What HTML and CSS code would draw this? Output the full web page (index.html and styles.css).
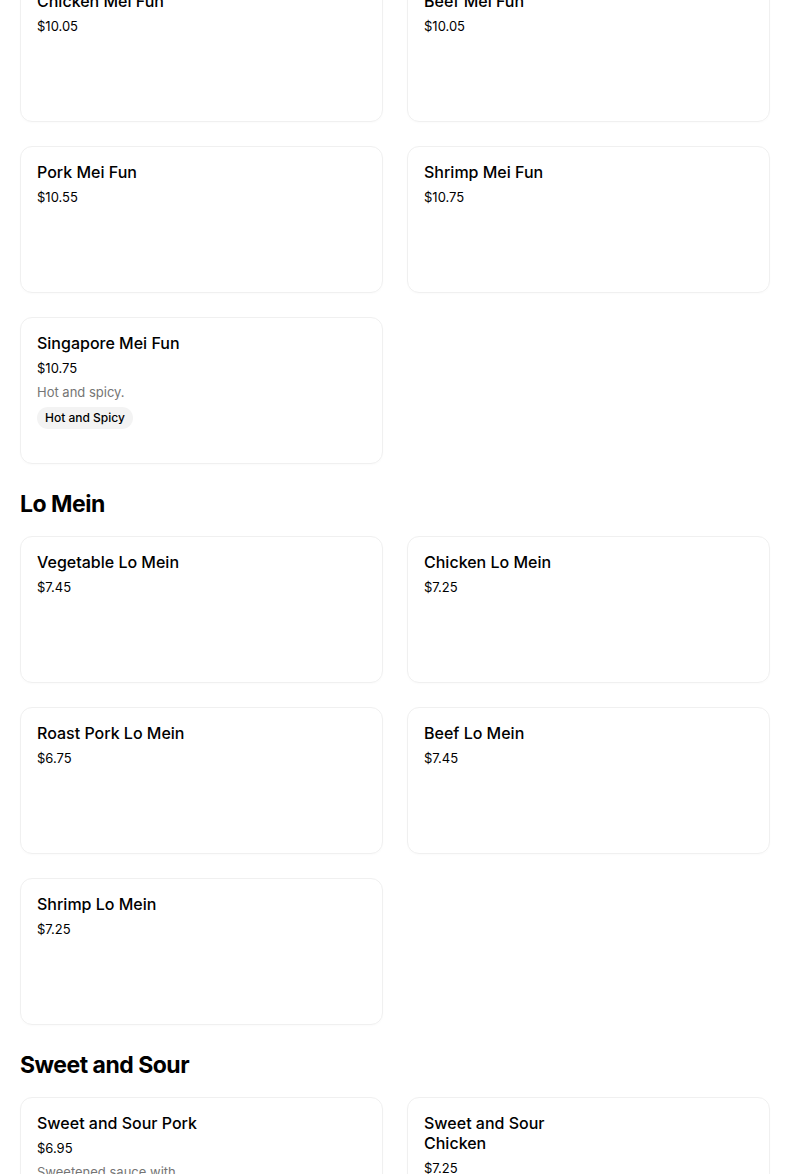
FILE: index.html
```html
<!DOCTYPE html>
<html>
<head>
<meta charset="utf-8">
<link rel="stylesheet" href="styles.css">
</head>
<body>
<main class="menu">
  <div class="grid first">
    <div class="card"><div class="info"><div class="name">Chicken Mei Fun</div><div class="price">$10.05</div></div></div>
    <div class="card"><div class="info"><div class="name">Beef Mei Fun</div><div class="price">$10.05</div></div></div>
    <div class="card"><div class="info"><div class="name">Pork Mei Fun</div><div class="price">$10.55</div></div></div>
    <div class="card"><div class="info"><div class="name">Shrimp Mei Fun</div><div class="price">$10.75</div></div></div>
    <div class="card"><div class="info"><div class="name">Singapore Mei Fun</div><div class="price">$10.75</div><div class="desc">Hot and spicy.</div><span class="tag">Hot and Spicy</span></div></div>
  </div>
  <h2 class="section">Lo Mein</h2>
  <div class="grid">
    <div class="card"><div class="info"><div class="name">Vegetable Lo Mein</div><div class="price">$7.45</div></div></div>
    <div class="card"><div class="info"><div class="name">Chicken Lo Mein</div><div class="price">$7.25</div></div></div>
    <div class="card"><div class="info"><div class="name">Roast Pork Lo Mein</div><div class="price">$6.75</div></div></div>
    <div class="card"><div class="info"><div class="name">Beef Lo Mein</div><div class="price">$7.45</div></div></div>
    <div class="card"><div class="info"><div class="name">Shrimp Lo Mein</div><div class="price">$7.25</div></div></div>
  </div>
  <h2 class="section">Sweet and Sour</h2>
  <div class="grid">
    <div class="card"><div class="info"><div class="name">Sweet and Sour Pork</div><div class="price">$6.95</div><div class="desc">Sweetened sauce with pineapple and peppers.</div></div></div>
    <div class="card"><div class="info"><div class="name">Sweet and Sour Chicken</div><div class="price">$7.25</div><div class="desc">Sweetened sauce with pineapple and peppers.</div></div></div>
  </div>
</main>
</body>
</html>
```
FILE: styles.css
```css
html, body {
  margin: 0;
  padding: 0;
  background: #ffffff;
  overflow: hidden;
}
body {
  font-family: Inter, "Noto Sans", Arial, sans-serif;
  color: #000000;
}
.menu {
  width: 750px;
  padding: 0 0 0 20px;
}
.grid {
  display: grid;
  grid-template-columns: 1fr 1fr;
  gap: 24px;
}
.grid.first {
  margin-top: -25px;
}
.card {
  height: 147px;
  box-sizing: border-box;
  border: 1px solid #f0f0f0;
  border-radius: 12px;
  padding: 15px 16px;
  box-shadow: 0 1px 2px rgba(0,0,0,0.02);
}
.info {
  max-width: 170px;
}
.name {
  font-size: 16px;
  font-weight: 500;
  line-height: 20px;
  color: #000;
}
.price {
  margin-top: 5px;
  font-size: 13px;
  line-height: 20px;
  color: #000;
}
.desc {
  margin-top: 4px;
  font-size: 13px;
  line-height: 20px;
  color: #757575;
}
.tag {
  display: inline-block;
  margin-top: 5px;
  padding: 0 8px;
  height: 22px;
  line-height: 22px;
  border-radius: 11px;
  background: #f3f3f3;
  font-size: 12px;
  font-weight: 500;
}
.section {
  margin: 24px 0 16px;
  font-size: 23px;
  line-height: 32px;
  font-weight: 700;
  letter-spacing: -0.5px;
}
```
